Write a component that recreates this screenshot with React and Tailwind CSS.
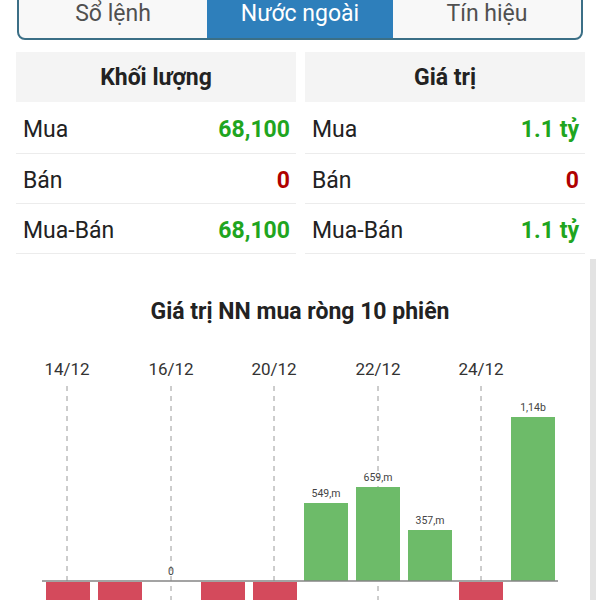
import React from "react";

const tabs = ["Sổ lệnh", "Nước ngoài", "Tín hiệu"];

const panels = [
    {
        title: "Khối lượng",
        rows: [
            { label: "Mua", value: "68,100", up: true },
            { label: "Bán", value: "0", up: false },
            { label: "Mua-Bán", value: "68,100", up: true },
        ],
    },
    {
        title: "Giá trị",
        rows: [
            { label: "Mua", value: "1.1 tỷ", up: true },
            { label: "Bán", value: "0", up: false },
            { label: "Mua-Bán", value: "1.1 tỷ", up: true },
        ],
    },
];

// bars: x = left edge, top = y of top (svg coords); neg = red, runs off the bottom
const bars = [
    { x: 46, neg: true },
    { x: 98, neg: true },
    { x: 149, zero: true, label: "0" },
    { x: 201, neg: true },
    { x: 253, neg: true },
    { x: 304, top: 163, label: "549,m" },
    { x: 356, top: 147, label: "659,m" },
    { x: 408, top: 190, label: "357,m" },
    { x: 459, neg: true },
    { x: 511, top: 77, label: "1,14b" },
];

const dates = [
    { x: 67, t: "14/12" },
    { x: 171, t: "16/12" },
    { x: 274, t: "20/12" },
    { x: 378, t: "22/12" },
    { x: 481, t: "24/12" },
];

function Chart() {
    const zero = 241;
    return (
        <svg width="590" height="260" className="block mt-[14px]" style={{ fontFamily: "Roboto, sans-serif" }}>
            {dates.map((d) => (
                <g key={d.t}>
                    <text x={d.x} y="35" textAnchor="middle" fontSize="17" fill="#333">
                        {d.t}
                    </text>
                    <line x1={d.x} y1="46" x2={d.x} y2="260" stroke="#9a9a9a" strokeWidth="1" strokeDasharray="5 5" />
                </g>
            ))}
            {bars.map((b, i) => {
                if (b.zero) {
                    return (
                        <text key={i} x={b.x + 22} y="235" textAnchor="middle" fontSize="10.5" fill="#444">
                            {b.label}
                        </text>
                    );
                }
                if (b.neg) {
                    return <rect key={i} x={b.x} y={zero + 1} width="44" height="40" fill="#d44a5c" />;
                }
                return (
                    <g key={i}>
                        <rect x={b.x} y={b.top} width="44" height={zero - b.top} fill="#6dbb69" />
                        <text x={b.x + 22} y={b.top - 6} textAnchor="middle" fontSize="10.5" fill="#444">
                            {b.label}
                        </text>
                    </g>
                );
            })}
            <line x1="42" y1={zero} x2="558" y2={zero} stroke="#858585" strokeWidth="1.5" />
        </svg>
    );
}

export default function App() {
    return (
        <div className="relative w-[600px] h-[600px] overflow-hidden bg-white font-['Roboto',sans-serif]">
            {/* TABS */}
            <div className="mx-[17px] -mt-[12px] h-[52px] border-2 border-[#3b6f86] rounded-lg overflow-hidden grid grid-cols-[188px_186px_1fr] bg-[#f8f8f8]">
                {tabs.map((t, idx) => (
                    <div
                        key={t}
                        className={`flex items-center justify-center text-[23px] ${idx === 1 ? "bg-[#2e7fbb] text-white" : "text-[#505050]"}`}
                    >
                        {t}
                    </div>
                ))}
            </div>

            {/* SUMMARY */}
            <div className="mt-[12px] px-[16px] grid grid-cols-[280px_280px] gap-[9px]">
                {panels.map((p) => (
                    <div key={p.title}>
                        <div className="h-[50px] pt-[2px] bg-[#f4f4f4] flex items-center justify-center text-[23px] font-bold text-[#222]">
                            {p.title}
                        </div>
                        {p.rows.map((r, i) => (
                            <div
                                key={r.label}
                                className={`flex items-center justify-between pl-[7px] pr-[6px] pt-[5px] border-b border-[#ececec] text-[23px] ${i === 0 ? "h-[52px]" : "h-[50px]"}`}
                            >
                                <span className="text-[#222]">{r.label}</span>
                                <span className={`font-bold ${r.up ? "text-[#1fa520]" : "text-[#b00000]"}`}>{r.value}</span>
                            </div>
                        ))}
                    </div>
                ))}
            </div>

            {/* CHART */}
            <div className="mt-[44px] h-[28px] leading-[28px] text-center text-[23px] font-bold text-[#222]">
                Giá trị NN mua ròng 10 phiên
            </div>
            <Chart />

            <div className="absolute right-[4px] top-[259px] bottom-0 w-[6px] bg-[#e3e3e3]" />
        </div>
    );
}
